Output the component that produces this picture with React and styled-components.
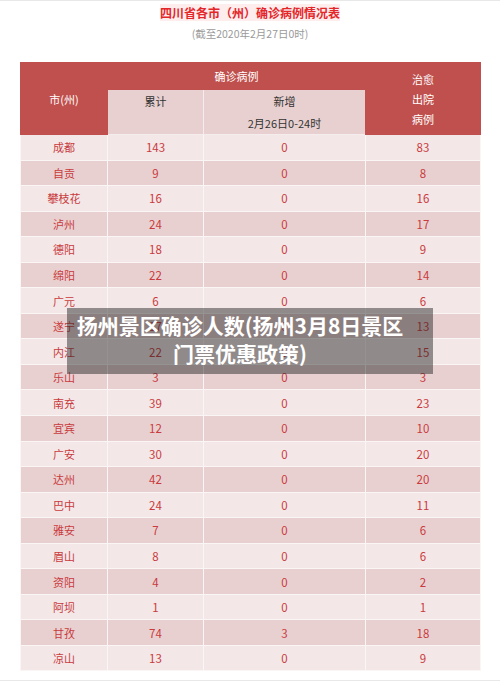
import React from "react";
import styled, { createGlobalStyle } from "styled-components";

const Global = createGlobalStyle`
  html, body { margin: 0; padding: 0; background: #fff; }
  body { font-family: "Noto Sans CJK SC", "Noto Sans", sans-serif; }
`;

const Page = styled.div`
  position: relative;
  width: 500px;
  height: 681px;
  box-sizing: border-box;
  border-top: 1px solid #e8e8e8;
  border-bottom: 1px solid #e8e8e8;
  padding-top: 5px;
  overflow: hidden;
`;

const Title = styled.div`
  text-align: center;
  line-height: 14px;
  font-size: 12px;
  font-weight: 700;
  color: #e3262a;
  span { background: #fdeded; }
`;

const Subtitle = styled.div`
  margin-top: 7px;
  text-align: center;
  line-height: 14px;
  font-size: 10.5px;
  color: #9a9a9a;
`;

const Table = styled.table`
  margin: 21px 0 0 20px;
  width: 460px;
  table-layout: fixed;
  border-collapse: collapse;
  font-size: 11.5px;
`;

const HeadCell = styled.th`
  background: ${(p) => (p.$sub ? "#e8d0d0" : "#c0504d")};
  color: ${(p) => (p.$sub ? "#333" : "#fff")};
  font-weight: 400;
  font-size: 11px;
  border: 1px solid ${(p) => (p.$sub ? "#f5eded" : "#c0504d")};
  text-align: center;
  vertical-align: ${(p) => (p.$top ? "top" : "middle")};
  padding: ${(p) => (p.$top ? "0" : "0")};
  line-height: ${(p) => (p.$lh ? p.$lh : "22px")};
`;

const Row = styled.tr`
  height: 25.55px;
  background: ${(p) => (p.$odd ? "#e8d0d0" : "#f3e7e7")};
`;

const Cell = styled.td`
  border: 1px solid #fbf6f6;
  text-align: center;
  padding: 0;
  color: #c93b3e;
  font-size: ${(p) => (p.$name ? "11px" : "11.5px")};
`;

const Overlay = styled.div`
  position: absolute;
  left: 67px;
  top: 307px;
  width: 366px;
  height: 66px;
  box-sizing: border-box;
  padding: 3px 20px 0 0;
  background: rgba(35, 35, 35, 0.47);
  color: #fff;
  font-weight: 700;
  font-size: 21px;
  line-height: 28px;
  text-align: center;
`;

const Line = styled.div`
  white-space: nowrap;
`;

const data = [
  ["成都", 143, 0, 83],
  ["自贡", 9, 0, 8],
  ["攀枝花", 16, 0, 16],
  ["泸州", 24, 0, 17],
  ["德阳", 18, 0, 9],
  ["绵阳", 22, 0, 14],
  ["广元", 6, 0, 6],
  ["遂宁", 17, 0, 13],
  ["内江", 22, 0, 15],
  ["乐山", 3, 0, 3],
  ["南充", 39, 0, 23],
  ["宜宾", 12, 0, 10],
  ["广安", 30, 0, 20],
  ["达州", 42, 0, 20],
  ["巴中", 24, 0, 11],
  ["雅安", 7, 0, 6],
  ["眉山", 8, 0, 6],
  ["资阳", 4, 0, 2],
  ["阿坝", 1, 0, 1],
  ["甘孜", 74, 3, 18],
  ["凉山", 13, 0, 9],
];

export default function App() {
  return (
    <>
      <Global />
      <Page>
        <Title>
          <span>四川省各市（州）确诊病例情况表</span>
        </Title>
        <Subtitle>(截至2020年2月27日0时)</Subtitle>
        <Table>
          <colgroup>
            <col style={{ width: 87 }} />
            <col style={{ width: 96 }} />
            <col style={{ width: 162 }} />
            <col style={{ width: 115 }} />
          </colgroup>
          <thead>
            <tr style={{ height: 27 }}>
              <HeadCell rowSpan={2}>市(州)</HeadCell>
              <HeadCell colSpan={2}>确诊病例</HeadCell>
              <HeadCell rowSpan={2} $lh="20px">
                治愈
                <br />
                出院
                <br />
                病例
              </HeadCell>
            </tr>
            <tr style={{ height: 45 }}>
              <HeadCell $sub $top>累计</HeadCell>
              <HeadCell $sub $top>
                新增
                <br />
                2月26日0-24时
              </HeadCell>
            </tr>
          </thead>
          <tbody>
            {data.map((r, i) => (
              <Row key={r[0]} $odd={i % 2 === 1}>
                <Cell $name>{r[0]}</Cell>
                <Cell>{r[1]}</Cell>
                <Cell>{r[2]}</Cell>
                <Cell>{r[3]}</Cell>
              </Row>
            ))}
          </tbody>
        </Table>
        <Overlay>
          <Line>扬州景区确诊人数(扬州3月8日景区</Line>
          <Line>门票优惠政策)</Line>
        </Overlay>
      </Page>
    </>
  );
}
